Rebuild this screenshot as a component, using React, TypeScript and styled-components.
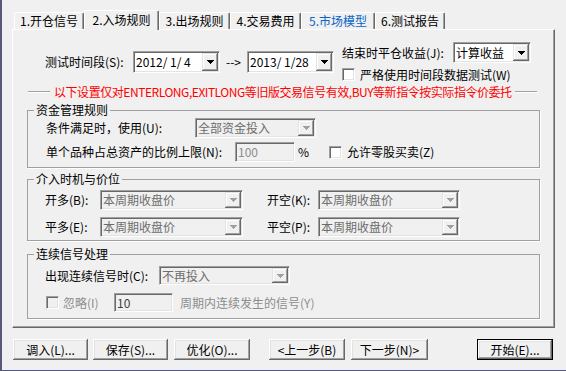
import React from 'react';
import styled, { createGlobalStyle, css } from 'styled-components';

const GlobalStyle = createGlobalStyle`
  html, body { margin: 0; padding: 0; background: #f0f0f0; }
  body {
    font-family: "Noto Sans CJK SC", "Noto Sans", sans-serif;
    font-size: 12px;
    color: #000;
  }
  * { box-sizing: border-box; }
`;

const Window = styled.div`
  width: 566px;
  height: 371px;
  border-left: 2px solid #56567f;
  border-bottom: 1px solid #56567f;
  background: #f0f0f0;
  padding: 10px 0 0 10px;
  display: flex;
  flex-direction: column;
  line-height: 14px;
`;

const TabStrip = styled.div`
  display: flex;
  align-items: flex-end;
  height: 19px;
  padding-left: 2px;
  position: relative;
  z-index: 1;
`;

const Tab = styled.div<{ $w: number; $active?: boolean; $color?: string }>`
  width: ${p => p.$w}px;
  height: ${p => (p.$active ? 20 : 17)}px;
  margin-bottom: ${p => (p.$active ? -1 : 0)}px;
  background: #f0f0f0;
  border-top: 1px solid #fff;
  border-left: 1px solid #fff;
  border-right: 1px solid #696969;
  box-shadow: inset -1px 0 0 #a0a0a0;
  border-top-left-radius: 2px;
  border-top-right-radius: 2px;
  display: flex;
  align-items: center;
  justify-content: center;
  padding-bottom: ${p => (p.$active ? 2 : 0)}px;
  color: ${p => p.$color || '#000'};
  white-space: nowrap;
`;

const Panel = styled.div`
  width: 543px;
  height: 299px;
  border-top: 1px solid #fff;
  border-left: 1px solid #fff;
  border-right: 1px solid #696969;
  border-bottom: 1px solid #696969;
  box-shadow: inset -1px -1px 0 #a0a0a0;
  padding: 12px 0 0 14px;
  display: flex;
  flex-direction: column;
`;

const TopRow = styled.div`
  display: flex;
  align-items: center;
  padding-left: 18px;
`;

const Row = styled.div<{ $h: number; $ml?: number }>`
  display: flex;
  align-items: center;
  height: ${p => p.$h}px;
  margin-left: ${p => p.$ml || 0}px;
`;

const Column = styled.div<{ $ml: number; $gap: number }>`
  display: flex;
  flex-direction: column;
  margin-left: ${p => p.$ml}px;
  gap: ${p => p.$gap}px;
`;

const Label = styled.span<{ $w?: number; $ml?: number; $muted?: boolean; $center?: boolean }>`
  ${p => p.$w && css`width: ${p.$w}px;`}
  margin-left: ${p => p.$ml || 0}px;
  flex-shrink: 0;
  white-space: pre;
  text-align: ${p => (p.$center ? 'center' : 'left')};
  color: ${p => (p.$muted ? '#8d8d8d' : '#000')};
`;

const Frame = styled.div<{ $w: number; $h: number; $disabled?: boolean }>`
  width: ${p => p.$w}px;
  height: ${p => p.$h}px;
  flex-shrink: 0;
  display: flex;
  align-items: stretch;
  border-top: 1px solid #a0a0a0;
  border-left: 1px solid #a0a0a0;
  border-right: 1px solid #fff;
  border-bottom: 1px solid #fff;
  box-shadow: inset 1px 1px 0 #696969, inset -1px -1px 0 #e3e3e3;
  background: ${p => (p.$disabled ? '#f0f0f0' : '#fff')};
  padding: 1px;
`;

const FieldText = styled.span<{ $tone?: string }>`
  flex: 1;
  display: flex;
  align-items: center;
  padding-left: 1px;
  white-space: pre;
  overflow: hidden;
  color: ${p => p.$tone || '#000'};
`;

const DropButton = styled.span`
  width: 16px;
  flex-shrink: 0;
  display: flex;
  align-items: center;
  justify-content: center;
  background: #f0f0f0;
  box-shadow: inset -1px -1px 0 #696969, inset 1px 1px 0 #e3e3e3, inset -2px -2px 0 #a0a0a0, inset 2px 2px 0 #fff;
`;

const CheckBox = styled.span<{ $disabled?: boolean; $ml?: number }>`
  width: 13px;
  height: 13px;
  flex-shrink: 0;
  margin-left: ${p => p.$ml || 0}px;
  border-top: 1px solid #a0a0a0;
  border-left: 1px solid #a0a0a0;
  border-right: 1px solid #fff;
  border-bottom: 1px solid #fff;
  box-shadow: inset 1px 1px 0 #696969, inset -1px -1px 0 #e3e3e3;
  background: ${p => (p.$disabled ? '#f0f0f0' : '#fff')};
`;

const RedRow = styled.div`
  display: flex;
  align-items: center;
  height: 16px;
  margin: 3px 0 0 1px;
  width: 509px;
`;

const Rule = styled.span<{ $w?: number }>`
  height: 2px;
  border-top: 1px solid #a0a0a0;
  border-bottom: 1px solid #fff;
  ${p => (p.$w ? css`width: ${p.$w}px; flex-shrink: 0;` : css`flex: 1;`)}
`;

const RedText = styled.span`
  color: #ff0000;
  margin: 0 3px 0 4px;
  white-space: nowrap;
  letter-spacing: -0.45px;
`;

const Group = styled.fieldset<{ $mt: number }>`
  margin: ${p => p.$mt}px 0 0 0;
  padding: 0;
  width: 513px;
  min-width: 0;
  border: 1px solid #a0a0a0;
  box-shadow: 1px 1px 0 #fff;
`;

const Legend = styled.legend`
  padding: 0 2px;
  margin-left: 6px;
  line-height: 14px;
  font-size: 12px;
`;

const GroupBody = styled.div<{ $pad: string; $gap: number }>`
  display: flex;
  flex-direction: column;
  padding: ${p => p.$pad};
  gap: ${p => p.$gap}px;
`;

const ButtonBar = styled.div`
  display: flex;
  margin-top: 11px;
`;

const Button = styled.div<{ $w: number; $ml: number; $default?: boolean }>`
  width: ${p => p.$w}px;
  height: 21px;
  margin-left: ${p => p.$ml}px;
  display: flex;
  align-items: center;
  justify-content: center;
  background: #f0f0f0;
  white-space: nowrap;
  box-shadow: inset -1px -1px 0 #696969, inset 1px 1px 0 #fff, inset -2px -2px 0 #a0a0a0, inset 2px 2px 0 #e3e3e3;
  ${p =>
    p.$default &&
    css`
      border: 1px solid #000;
    `}
`;

const Arrow: React.FC<{ disabled?: boolean }> = ({ disabled }) => (
  <svg width="7" height="4" viewBox="0 0 7 4" shapeRendering="crispEdges">
    <polygon points="0,0 7,0 3.5,4" fill={disabled ? '#a0a0a0' : '#000'} />
  </svg>
);

const Combo: React.FC<{ w: number; h: number; value: string; disabled?: boolean }> = ({ w, h, value, disabled }) => (
  <Frame $w={w} $h={h} $disabled={disabled}>
    <FieldText $tone={disabled ? '#6d6d6d' : '#000'}>{value}</FieldText>
    <DropButton>
      <Arrow disabled={disabled} />
    </DropButton>
  </Frame>
);

const tabs = [
  { w: 70, label: '1.开仓信号' },
  { w: 75, label: '2.入场规则', active: true },
  { w: 71, label: '3.出场规则' },
  { w: 71, label: '4.交易费用' },
  { w: 74, label: '5.市场模型', color: '#0a64c8' },
  { w: 70, label: '6.测试报告' },
];

export default function App() {
  return (
    <>
      <GlobalStyle />
      <Window>
        <TabStrip>
          {tabs.map(t => (
            <Tab key={t.label} $w={t.w} $active={t.active} $color={t.color}>
              {t.label}
            </Tab>
          ))}
        </TabStrip>
        <Panel>
          <TopRow>
            <Label $w={88}>测试时间段(S):</Label>
            <Combo w={87} h={22} value="2012/ 1/ 4" />
            <Label $w={27} $center>--&gt;</Label>
            <Combo w={87} h={22} value="2013/ 1/28" />
            <Column $ml={8} $gap={5}>
              <Row $h={21}>
                <Label $w={111}>结束时平仓收益(J):</Label>
                <Combo w={78} h={21} value="计算收益" />
              </Row>
              <Row $h={13}>
                <CheckBox />
                <Label $ml={5}>严格使用时间段数据测试(W)</Label>
              </Row>
            </Column>
          </TopRow>

          <RedRow>
            <Rule $w={22} />
            <RedText>以下设置仅对ENTERLONG,EXITLONG等旧版交易信号有效,BUY等新指令按实际指令价委托</RedText>
            <Rule />
          </RedRow>

          <Group $mt={3}>
            <Legend>资金管理规则</Legend>
            <GroupBody $pad="1px 0 5px 18px" $gap={4}>
              <Row $h={20}>
                <Label $w={149}>条件满足时，使用(U):</Label>
                <Combo w={121} h={20} value="全部资金投入" disabled />
              </Row>
              <Row $h={20}>
                <Label $w={189}>单个品种占总资产的比例上限(N):</Label>
                <Frame $w={60} $h={20} $disabled>
                  <FieldText $tone="#8d8d8d">100</FieldText>
                </Frame>
                <Label $ml={3}>%</Label>
                <CheckBox $ml={20} />
                <Label $ml={5}>允许零股买卖(Z)</Label>
              </Row>
            </GroupBody>
          </Group>

          <Group $mt={4}>
            <Legend>介入时机与价位</Legend>
            <GroupBody $pad="4px 0 3px 17px" $gap={7}>
              <Row $h={20}>
                <Label $w={55}>开多(B):</Label>
                <Combo w={143} h={20} value="本周期收盘价" disabled />
                <Label $w={51} $ml={24}>开空(K):</Label>
                <Combo w={142} h={20} value="本周期收盘价" disabled />
              </Row>
              <Row $h={20}>
                <Label $w={55}>平多(E):</Label>
                <Combo w={143} h={20} value="本周期收盘价" disabled />
                <Label $w={51} $ml={24}>平空(P):</Label>
                <Combo w={142} h={20} value="本周期收盘价" disabled />
              </Row>
            </GroupBody>
          </Group>

          <Group $mt={6}>
            <Legend>连续信号处理</Legend>
            <GroupBody $pad="5px 0 6px 17px" $gap={8}>
              <Row $h={19}>
                <Label $w={114}>出现连续信号时(C):</Label>
                <Combo w={131} h={19} value="不再投入" disabled />
              </Row>
              <Row $h={19}>
                <CheckBox $disabled $ml={1} />
                <Label $w={51} $ml={4} $muted>忽略(I)</Label>
                <Frame $w={59} $h={19} $disabled>
                  <FieldText $tone="#404040">10</FieldText>
                </Frame>
                <Label $ml={7} $muted>周期内连续发生的信号(Y)</Label>
              </Row>
            </GroupBody>
          </Group>
        </Panel>

        <ButtonBar>
          <Button $w={75} $ml={1}>调入(L)...</Button>
          <Button $w={75} $ml={5}>保存(S)...</Button>
          <Button $w={76} $ml={6}>优化(O)...</Button>
          <Button $w={76} $ml={19}>&lt;上一步(B)</Button>
          <Button $w={77} $ml={6}>下一步(N)&gt;</Button>
          <Button $w={76} $ml={49} $default>开始(E)...</Button>
        </ButtonBar>
      </Window>
    </>
  );
}
